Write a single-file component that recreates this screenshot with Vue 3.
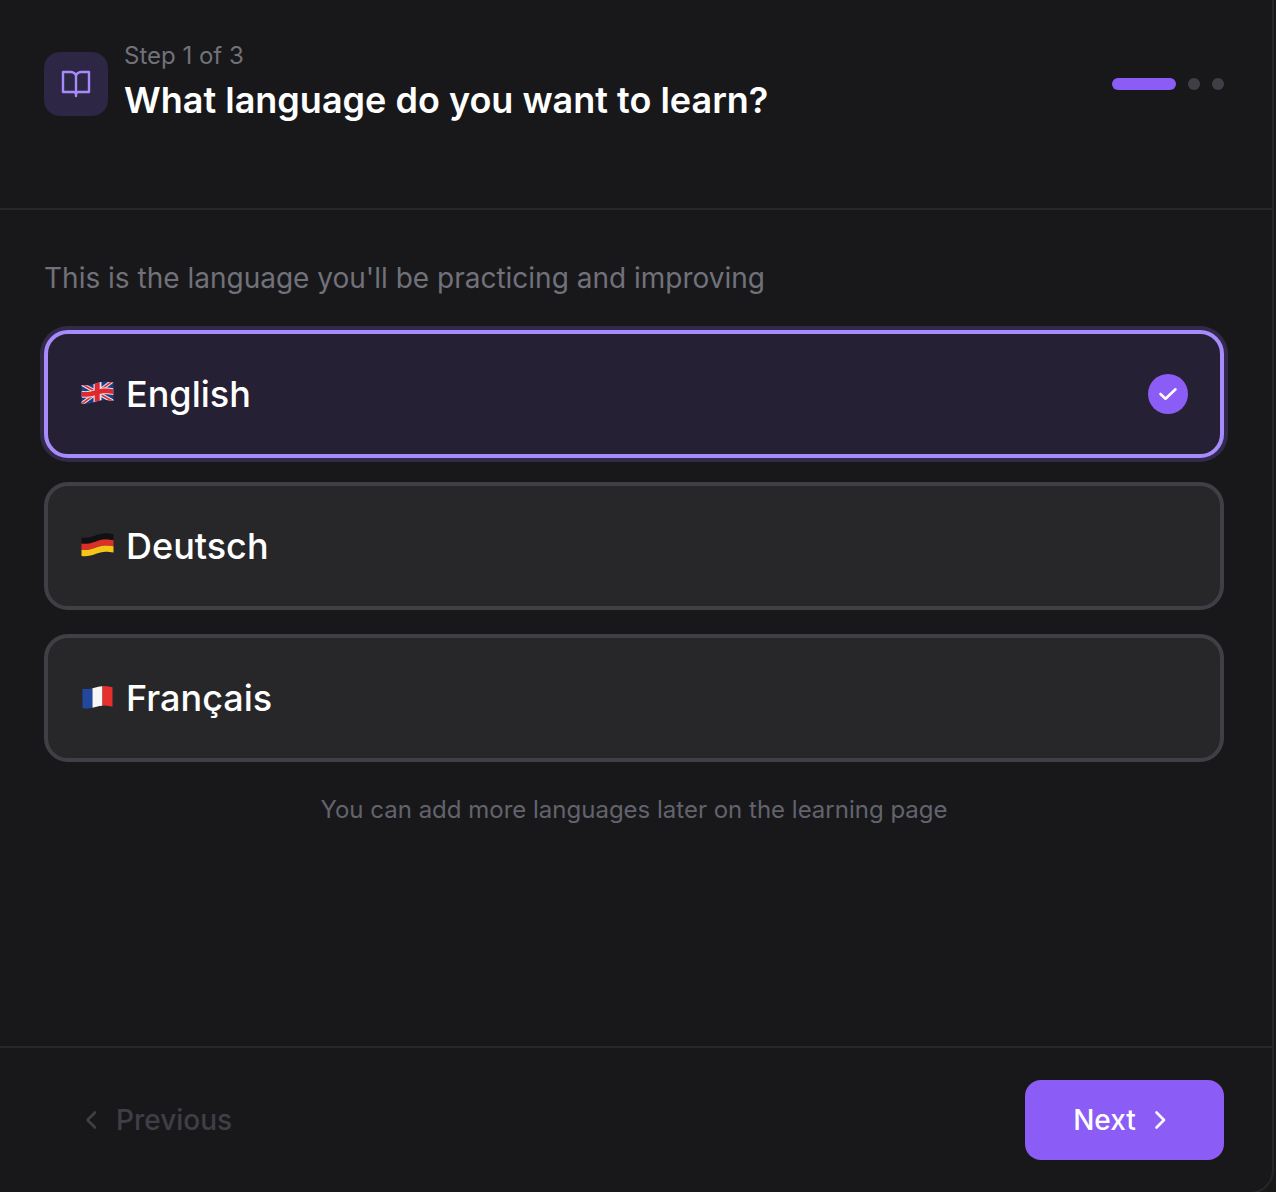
<script setup>
const wave = (x, base, amp, tilt) => base - tilt * (x / 32) + amp * Math.sin((x / 32) * Math.PI * 2 + 0.4)
const band = (t0, t1, f) => {
  const top = [], bot = []
  for (let i = 0; i <= 16; i++) {
    const x = i * 2
    top.push(`${x + 1.5},${wave(x, f.y + f.h * t0, f.amp, f.tilt).toFixed(2)}`)
    bot.unshift(`${x + 1.5},${wave(x, f.y + f.h * t1, f.amp, f.tilt).toFixed(2)}`)
  }
  return top.concat(bot).join(' ')
}
const vband = (x0, x1, f) => {
  const top = [], bot = []
  for (let x = x0; x <= x1 + 0.01; x += 1) {
    top.push(`${x + 1.5},${wave(x, f.y, f.amp, f.tilt).toFixed(2)}`)
    bot.unshift(`${x + 1.5},${wave(x, f.y + f.h, f.amp, f.tilt).toFixed(2)}`)
  }
  return top.concat(bot).join(' ')
}
const uk = { y: 3.5, h: 18.5, amp: 1.1, tilt: 2.5 }
const de = { y: 4, h: 18.5, amp: 1.2, tilt: 3.5 }
const fr = { y: 3, h: 19.5, amp: 1.2, tilt: 1 }
const ukClip = band(0, 1, uk)
const ukCross = [
  { fill: '#e4e4e8', points: vband(12, 20, uk) },
  { fill: '#e4e4e8', points: band(0.32, 0.68, uk) },
  { fill: '#e0282e', points: vband(13.2, 18.8, uk) },
  { fill: '#e0282e', points: band(0.37, 0.63, uk) }
]
const options = [
  { name: 'English', code: 'uk', selected: true },
  { name: 'Deutsch', code: 'de', selected: false },
  { name: 'Français', code: 'fr', selected: false }
]
const deBands = [
  { fill: '#111113', points: band(0, 1 / 3, de) },
  { fill: '#dc2f26', points: band(1 / 3, 2 / 3, de) },
  { fill: '#f5c518', points: band(2 / 3, 1, de) }
]
const frBands = [
  { fill: '#23479c', points: vband(1, 11, fr) },
  { fill: '#f7f7f7', points: vband(11, 21, fr) },
  { fill: '#e5302d', points: vband(21, 31, fr) }
]
</script>

<template>
  <div class="frame">
    <header class="head">
      <div class="head-left">
        <div class="book">
          <svg width="32" height="32" viewBox="0 0 32 32" fill="none" stroke="#a78bfa" stroke-width="2.4" stroke-linecap="round" stroke-linejoin="round">
            <path d="M16 8V28" />
            <path d="M3 4h8c2.500 0 5 2 5 4 0-2 2.500-4 5-4h8v20H18.500c-1.500 0-2.500 1-2.500 2 0-1-1-2-2.500-2H3Z" />
          </svg>
        </div>
        <div class="head-text">
          <div class="step">Step 1 of 3</div>
          <h1 class="title">What language do you want to learn?</h1>
        </div>
      </div>
      <div class="progress">
        <span class="bar"></span>
        <span class="dot"></span>
        <span class="dot"></span>
      </div>
    </header>

    <main class="body">
      <p class="sub">This is the language you'll be practicing and improving</p>
      <div class="list">
        <div v-for="o in options" :key="o.code" class="option" :class="{ selected: o.selected }">
          <svg class="flag" width="34" height="26" viewBox="0 0 34 26">
            <template v-if="o.code === 'uk'">
              <defs>
                <clipPath id="ukclip"><polygon :points="ukClip" /></clipPath>
              </defs>
              <g clip-path="url(#ukclip)">
                <rect x="0" y="0" width="34" height="26" fill="#1f3a86" />
                <path d="M0 2 34 21M0 24 34 -1" stroke="#e4e4e8" stroke-width="3.800" />
                <path d="M0 2 34 21M0 24 34 -1" stroke="#d8343a" stroke-width="1.800" />
                <polygon v-for="(b, i) in ukCross" :key="i" :points="b.points" :fill="b.fill" />
              </g>
            </template>
            <template v-else-if="o.code === 'de'">
              <polygon v-for="b in deBands" :key="b.fill" :points="b.points" :fill="b.fill" />
            </template>
            <template v-else>
              <polygon v-for="b in frBands" :key="b.fill" :points="b.points" :fill="b.fill" />
            </template>
          </svg>
          <span class="name">{{ o.name }}</span>
          <span v-if="o.selected" class="check">
            <svg width="20" height="20" viewBox="0 0 20 20" fill="none" stroke="#fff" stroke-width="2.600" stroke-linecap="round" stroke-linejoin="round">
              <path d="M2.500 10 7.500 14.700 17.500 5.300" />
            </svg>
          </span>
        </div>
      </div>
      <p class="hint">You can add more languages later on the learning page</p>
    </main>

    <footer class="foot">
      <button class="prev">
        <svg width="24" height="24" viewBox="0 0 24 24" fill="none" stroke="#3f3f46" stroke-width="2.600" stroke-linecap="round" stroke-linejoin="round">
          <path d="M15 4.500 7.500 12l7.500 7.500" />
        </svg>
        <span>Previous</span>
      </button>
      <button class="next">
        <span>Next</span>
        <svg width="24" height="24" viewBox="0 0 24 24" fill="none" stroke="#fff" stroke-width="2.600" stroke-linecap="round" stroke-linejoin="round">
          <path d="M8.500 4.500 16 12l-7.500 7.500" />
        </svg>
      </button>
    </footer>
  </div>
</template>

<style>
html, body { margin: 0; background: #18181b; overflow: hidden; height: 1192px; }
</style>

<style scoped>
.frame {
  box-sizing: border-box;
  width: 1274px;
  height: 1194px;
  display: flex;
  flex-direction: column;
  background: #18181b;
  border-right: 2px solid #27272a;
  border-bottom: 2px solid #27272a;
  border-bottom-right-radius: 24px;
  font-family: Inter, "Liberation Sans", sans-serif;
  color: #fff;
  overflow: hidden;
}
.head {
  box-sizing: border-box;
  height: 210px;
  flex: none;
  padding: 40px 48px 0 44px;
  display: flex;
  justify-content: space-between;
  align-items: flex-start;
  border-bottom: 2px solid #27272a;
}
.head-left { display: flex; align-items: flex-start; gap: 16px; }
.book {
  width: 64px;
  height: 64px;
  margin-top: 12px;
  border-radius: 16px;
  background: #2e2645;
  display: flex;
  align-items: center;
  justify-content: center;
}
.head-text { display: flex; flex-direction: column; gap: 4px; }
.step { font-size: 24px; line-height: 32px; color: #71717a; }
.title { margin: 0; font-size: 36px; line-height: 48px; font-weight: 600; color: #fff; }
.progress { display: flex; align-items: center; gap: 12px; margin-top: 38px; }
.bar { width: 64px; height: 12px; border-radius: 6px; background: #8b5cf6; }
.dot { width: 12px; height: 12px; border-radius: 50%; background: #3f3f46; }
.body {
  flex: 1;
  box-sizing: border-box;
  padding: 48px 48px 0 44px;
}
.sub { margin: 0; font-size: 28px; line-height: 40px; color: #71717a; }
.list { display: flex; flex-direction: column; gap: 24px; margin-top: 32px; }
.option {
  box-sizing: border-box;
  height: 128px;
  padding: 0 32px;
  display: flex;
  align-items: center;
  gap: 12px;
  border: 4px solid #3f3f46;
  border-radius: 24px;
  background: #27272a;
}
.option.selected {
  border-color: #a78bfa;
  background: #252033;
  box-shadow: 0 0 0 4px #322a4a;
}
.flag { flex: none; }
.name { font-size: 36px; line-height: 48px; font-weight: 500; color: #fff; }
.check {
  margin-left: auto;
  width: 40px;
  height: 40px;
  border-radius: 50%;
  background: #8b5cf6;
  display: flex;
  align-items: center;
  justify-content: center;
}
.hint { margin: 32px 0 0; text-align: center; font-size: 24px; line-height: 32px; color: #63636d; }
.foot {
  box-sizing: border-box;
  flex: none;
  height: 146px;
  padding: 32px 48px 0 44px;
  border-top: 2px solid #27272a;
  display: flex;
  justify-content: space-between;
  align-items: flex-start;
}
button {
  font-family: inherit;
  font-size: 28px;
  font-weight: 500;
  border: 0;
  height: 80px;
  display: flex;
  align-items: center;
  background: none;
  padding: 0;
}
.prev { color: #3f3f46; gap: 12px; padding-left: 36px; }
.next {
  width: 199px;
  justify-content: center;
  gap: 12px;
  padding-right: 4px;
  color: #fff;
  background: #8b5cf6;
  border-radius: 16px;
}
</style>
